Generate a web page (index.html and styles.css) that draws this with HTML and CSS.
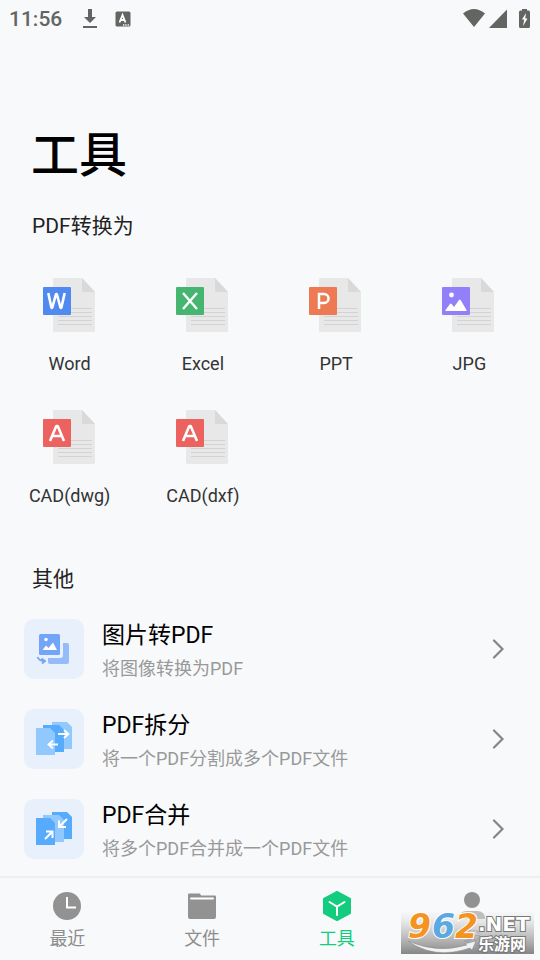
FILE: index.html
```html
<!DOCTYPE html>
<html lang="zh-CN">
<head>
<meta charset="utf-8">
<meta name="viewport" content="width=device-width, initial-scale=1">
<title>工具</title>
<link rel="stylesheet" href="styles.css">
</head>
<body>
<svg class="defs" width="0" height="0" aria-hidden="true">
  <defs>
    <symbol id="page" viewBox="0 0 60 60">
      <path fill="#e8e8e8" d="M14 3h28l13 14v39a1 1 0 0 1-1 1H14a1 1 0 0 1-1-1V4a1 1 0 0 1 1-1z"/>
      <path fill="#d9d9d9" d="M42 3l13 14H43a1 1 0 0 1-1-1z"/>
      <path stroke="#d3d3d3" d="M18 33.500h34M18 37.500h34M18 41.500h34M18 45.500h34M18 49.500h34"/>
    </symbol>
    <symbol id="letter-a" viewBox="0 0 60 60">
      <rect x="3" y="12" width="28" height="28" rx="1" fill="#ec625f"/>
      <path fill="none" stroke="#fff" stroke-width="2.600" stroke-linejoin="bevel" d="M10 34l6.300-15h1.400L24 34M12 29h10"/>
    </symbol>
    <symbol id="chevron" viewBox="0 0 12 22">
      <path fill="none" stroke="#858585" stroke-width="2.200" stroke-linecap="round" d="M2 2.500l8.500 8.500L2 19.500"/>
    </symbol>
  </defs>
</svg>
<div class="screen">
  <header class="status">
    <span class="clock">11:56</span>
    <svg class="download" width="16" height="22" viewBox="0 0 16 22"><path fill="#636563" d="M6 1h4v8h4l-6 6-6-6h4zM1 18h14v2H1z"/></svg>
    <svg class="input-mode" width="16" height="16" viewBox="0 0 16 16"><rect x=".5" y=".5" width="15" height="15" rx="1.500" fill="#636563"/><path fill="none" stroke="#fff" stroke-width="1.800" d="M4.500 11.500L7.500 4l3 7.500M5.500 9h4"/><path stroke="#fff" stroke-width="1.300" stroke-dasharray="1.300 1" d="M8 14h6"/></svg>
    <svg class="signals" width="68" height="22" viewBox="0 0 68 22"><path fill="#636563" d="M0 5.500Q11-3.500 22 5.500L11 19zM44 1.500V20H26zM59 2.500V1h5v1.500h1.500a1.500 1.500 0 0 1 1.500 1.500v14.500a1.500 1.500 0 0 1-1.500 1.500h-8a1.500 1.500 0 0 1-1.500-1.500V4a1.500 1.500 0 0 1 1.500-1.500z"/><path fill="#fff" d="M63 5l-4 6.500h2.200L60 18l4.500-7.500h-2.300z"/></svg>
  </header>
  <main class="content">
    <h1>工具</h1>
    <h2>PDF转换为</h2>
    <div class="formats">
      <button class="format" type="button"><svg class="file" viewBox="0 0 60 60"><use href="#page"/><rect x="3" y="12" width="28" height="28" rx="1" fill="#508af0"/><path fill="none" stroke="#fff" stroke-width="2.600" stroke-linejoin="bevel" d="M8.300 18l3.200 15h.7L16 19h.8l3.800 14h.7L24.700 18"/></svg><span>Word</span></button>
      <button class="format" type="button"><svg class="file" viewBox="0 0 60 60"><use href="#page"/><rect x="3" y="12" width="28" height="28" rx="1" fill="#45b570"/><path fill="none" stroke="#fff" stroke-width="2.400" d="M10 18l14 16M24 18L10 34"/></svg><span>Excel</span></button>
      <button class="format" type="button"><svg class="file" viewBox="0 0 60 60"><use href="#page"/><rect x="3" y="12" width="28" height="28" rx="1" fill="#ed7a52"/><path fill="none" stroke="#fff" stroke-width="2.500" d="M13 34V19h5a4.500 4.500 0 0 1 0 9h-5"/></svg><span>PPT</span></button>
      <button class="format" type="button"><svg class="file" viewBox="0 0 60 60"><use href="#page"/><rect x="3" y="12" width="28" height="28" rx="1" fill="#9180fa"/><circle cx="12.500" cy="20" r="2.400" fill="#fff"/><path fill="#fff" d="M7 36q-1 0-.5-1l4.500-6q.8-1 1.600 0l2.400 3 5-7q.8-1 1.600 0L27.500 35q.5 1-.5 1z"/></svg><span>JPG</span></button>
      <button class="format" type="button"><svg class="file" viewBox="0 0 60 60"><use href="#page"/><use href="#letter-a"/></svg><span>CAD(dwg)</span></button>
      <button class="format" type="button"><svg class="file" viewBox="0 0 60 60"><use href="#page"/><use href="#letter-a"/></svg><span>CAD(dxf)</span></button>
    </div>
    <h2>其他</h2>
    <div class="tools">
      <button class="tool" type="button">
        <svg class="tile" viewBox="0 0 60 60"><rect width="60" height="60" rx="10" fill="#e8f0fb"/><path fill="#95bbf9" d="M39 24h4a2 2 0 0 1 2 2v17a2 2 0 0 1-2 2H26a2 2 0 0 1-2-2v-4h12a3 3 0 0 0 3-3z"/><rect x="15" y="15" width="21" height="21" rx="1.500" fill="#72a4f8"/><circle cx="22" cy="20.500" r="1.700" fill="#fff"/><path fill="#fff" d="M18.500 31l3.500-4.500 2.500 2.500 4.500-5.500 4 7.500z"/><path fill="none" stroke="#72a4f8" stroke-width="1.800" d="M13.500 38q1.500 4 7 4M17.500 39.500l3.500 2.500-3 2.500"/></svg>
        <span class="copy"><span class="name">图片转PDF</span><span class="hint">将图像转换为PDF</span></span>
        <svg class="chevron"><use href="#chevron"/></svg>
      </button>
      <button class="tool" type="button">
        <svg class="tile" viewBox="0 0 60 60"><rect width="60" height="60" rx="10" fill="#e8f0fb"/><path fill="#91c9ff" d="M28 13h15l5 5v22H28z"/><path fill="#57abfc" d="M19 16h16l5 5v22H19z"/><path fill="#91c9ff" d="M12 19h14l5 5v22H12z"/><path fill="none" stroke="#fff" stroke-width="1.800" d="M34 25h10M40 21l4.500 4-4.500 4M34 35.500H25M29 31.500l-4.500 4 4.500 4"/></svg>
        <span class="copy"><span class="name">PDF拆分</span><span class="hint">将一个PDF分割成多个PDF文件</span></span>
        <svg class="chevron"><use href="#chevron"/></svg>
      </button>
      <button class="tool" type="button">
        <svg class="tile" viewBox="0 0 60 60"><rect width="60" height="60" rx="10" fill="#e8f0fb"/><path fill="#57abfc" d="M28 13h15l5 5v22H28z"/><path fill="#91c9ff" d="M19 16h16l5 5v22H19z"/><path fill="#57abfc" d="M12 19h14l5 5v22H12z"/><path fill="none" stroke="#fff" stroke-width="2" d="M43 20l-8 8M35 21.500V28h7M21 40l7.500-7.500M22 32.500h6.500V39"/></svg>
        <span class="copy"><span class="name">PDF合并</span><span class="hint">将多个PDF合并成一个PDF文件</span></span>
        <svg class="chevron"><use href="#chevron"/></svg>
      </button>
    </div>
  </main>
  <nav class="tabs">
    <a class="tab" href="#"><svg viewBox="0 0 32 32"><circle cx="16" cy="16" r="14" fill="#929292"/><path fill="none" stroke="#fff" stroke-width="2" d="M16 7v10.500h9"/></svg><span>最近</span></a>
    <a class="tab" href="#"><svg viewBox="0 0 32 32"><path fill="#929292" d="M3 3.500h11l1 2h14a1 1 0 0 1 1 1V27a2 2 0 0 1-2 2H4a2 2 0 0 1-2-2V4.500a1 1 0 0 1 1-1z"/><path stroke="#fff" stroke-width="2" stroke-linecap="round" d="M5 8.500h22"/></svg><span>文件</span></a>
    <a class="tab active" href="#"><svg viewBox="0 0 32 32"><path fill="#14cc7e" stroke="#14cc7e" stroke-width="2" stroke-linejoin="round" d="M16 2l13 7v14l-13 7-13-7V9z"/><path fill="none" stroke="#fff" stroke-width="2" stroke-linecap="round" d="M8.500 12l7.500 4.500 7.500-4.500M16 16.500V25"/></svg><span>工具</span></a>
    <a class="tab" href="#"><svg viewBox="0 0 32 32"><circle cx="16" cy="10" r="8" fill="#929292"/><path fill="#929292" d="M3 29q0-8 8-8h10q8 0 8 8z"/></svg><span>我</span></a>
  </nav>
  <svg class="watermark" viewBox="0 0 133 44" role="img" aria-label="962.NET 乐游网">
    <defs><linearGradient id="shade" x2="0" y2="1"><stop offset="0" stop-color="#fafafa" stop-opacity=".4"/><stop offset=".45" stop-color="#c4c4c4" stop-opacity=".75"/><stop offset="1" stop-color="#808080" stop-opacity=".96"/></linearGradient></defs>
    <rect width="133" height="44" fill="url(#shade)"/>
    <path fill="#f2f2f2" stroke="#888" stroke-width=".5" d="M7 31Q36 44 66 35l-3-1 12-3-4 9-2-2Q34 50 7 31z"/>
    <g class="digits"><text x="7" y="28" fill="#f59322">9</text><text x="31" y="28" fill="#5aa9e2">6</text><text x="54" y="28" fill="#f59322">2</text></g>
    <text class="domain" x="77" y="21">.NET</text>
    <text class="brand" x="77" y="40">乐游网</text>
  </svg>
</div>
</body>
</html>
```
FILE: styles.css
```css
* { box-sizing: border-box; }

body {
  margin: 0;
  background: #f8f9fb;
  color: #000;
  font-family: Roboto, "Noto Sans CJK SC", sans-serif;
}

.defs { position: absolute; }

.screen {
  position: relative;
  display: flex;
  flex-direction: column;
  min-height: 100vh;
}

.status {
  display: flex;
  align-items: center;
  height: 38px;
  padding: 0 9px;
}

.clock {
  color: #636563;
  font-size: 21px;
  font-weight: 500;
  line-height: 24px;
}

.download { margin-left: 20px; }
.input-mode { margin-left: 17px; }
.signals { margin-left: auto; }

.content { flex: 1; padding-top: 82px; }

h1, h2 { margin: 0; padding: 0 32px; }

h1 {
  padding-left: 31px;
  font-size: 48px;
  font-weight: 500;
  line-height: 72px;
}

h2 {
  color: #222;
  font-size: 21px;
  font-weight: 400;
  line-height: 32px;
}

h1 + h2 { margin-top: 18px; }

button {
  border: 0;
  padding: 0;
  background: none;
  color: inherit;
  font: inherit;
}

.formats {
  display: grid;
  grid-template-columns: repeat(4, 1fr);
  gap: 31px 0;
  padding: 33px 4px 55px 3px;
}

.format {
  display: flex;
  flex-direction: column;
  align-items: center;
  gap: 17px;
  color: #333;
  font-size: 18px;
  line-height: 24px;
}

.file { width: 60px; height: 60px; }

.tools {
  display: flex;
  flex-direction: column;
  gap: 24px;
  padding: 21px 24px 12px;
}

.tool {
  display: flex;
  align-items: center;
  gap: 18px;
  height: 66px;
  text-align: left;
}

.tile { width: 60px; height: 60px; }

.copy {
  display: flex;
  flex: 1;
  flex-direction: column;
  padding-top: 6px;
}

.name { font-size: 23px; line-height: 34px; }
.hint { color: #999; font-size: 18px; line-height: 32px; }

.chevron { width: 12px; height: 22px; margin-right: 12px; }

.tabs {
  display: grid;
  grid-template-columns: repeat(4, 1fr);
  height: 84px;
  padding: 12px 1px 0 0;
  border-top: 2px solid #eeeff1;
}

.tab {
  display: flex;
  flex-direction: column;
  align-items: center;
  gap: 4px;
  color: #8d8d8d;
  font-size: 18px;
  line-height: 26px;
  text-decoration: none;
}

.tab svg { width: 32px; height: 32px; }
.active { color: #14cc7e; }

.watermark {
  position: absolute;
  right: 6px;
  bottom: 6px;
  width: 133px;
  height: 44px;
  overflow: visible;
}

.digits {
  font: italic 700 33px "DejaVu Sans", sans-serif;
  paint-order: stroke;
  stroke: #fff;
  stroke-width: 2px;
}

.domain, .brand {
  fill: #fff;
  paint-order: stroke;
  stroke: #777;
  stroke-width: 2px;
}

.domain { font: 700 20px "DejaVu Sans", sans-serif; }
.brand { font: 700 16px "Noto Sans CJK SC", sans-serif; }
```
